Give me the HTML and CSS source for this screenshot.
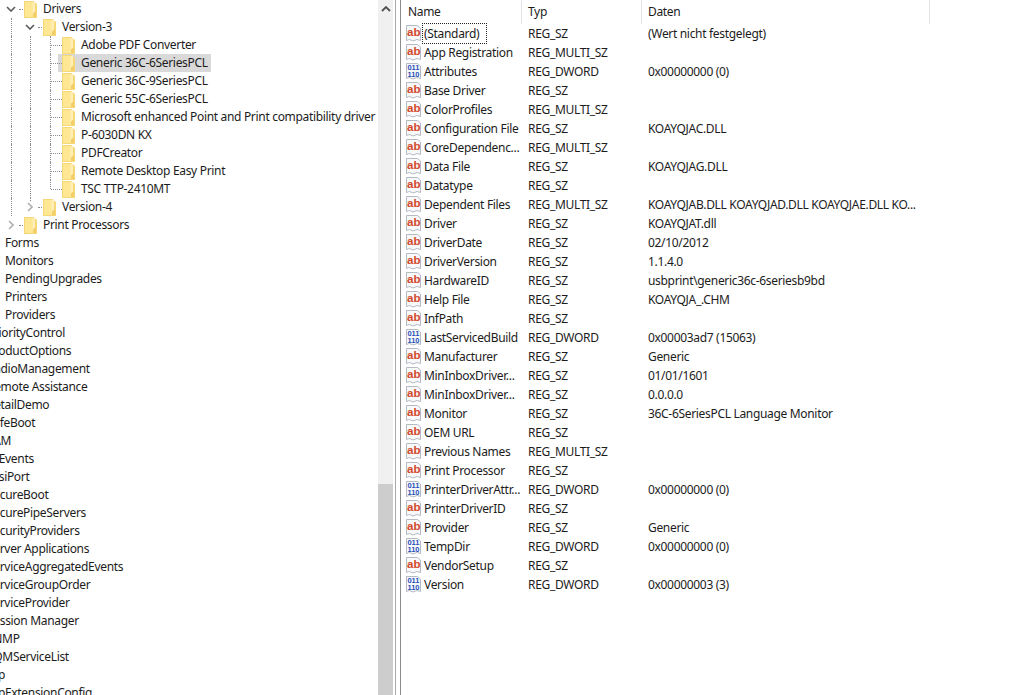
FILE: index.html
```html
<!DOCTYPE html>
<html lang="de">
<head>
<meta charset="utf-8">
<title>Registrierungs-Editor</title>
<link rel="stylesheet" href="styles.css">
</head>
<body>
<svg class="defs" width="0" height="0" aria-hidden="true">
  <symbol id="folder" viewBox="0 0 13 17">
    <path d="M0 0H9.5L13 3V17H0Z" fill="#f6d877"/>
    <path d="M1 1H11V16H1Z" fill="#ffeeb5"/>
    <path d="M1 1H8.5V16H1Z" fill="#ffe793"/>
    <path d="M9 16V12.5L12 10V16Z" fill="#f3cd66"/>
  </symbol>
  <symbol id="chev-down" viewBox="0 0 10 6">
    <path d="M1 1L5 5L9 1" fill="none" stroke="#5a5a5a" stroke-width="1.6"/>
  </symbol>
  <symbol id="chev-right" viewBox="0 0 6 10">
    <path d="M1 1L5 5L1 9" fill="none" stroke="#b0b0b0" stroke-width="1.6"/>
  </symbol>
  <symbol id="chev-up" viewBox="0 0 10 6">
    <path d="M1 5L5 1L9 5" fill="none" stroke="#505050" stroke-width="1.8"/>
  </symbol>
  <symbol id="ab" viewBox="0 0 15 17">
    <path d="M0.5 0.5H11.5L14.5 3V15.5L11 14.5L7 16L3.5 14.5L0.5 15.5Z" fill="#f7f8fa" stroke="#b4bac2"/>
    <text x="1" y="10.5" class="ab-text">ab</text>
  </symbol>
  <symbol id="bin" viewBox="0 0 15 17">
    <path d="M0.5 0.5H11.5L14.5 3V15.5L11 14.5L7 16L3.5 14.5L0.5 15.5Z" fill="#f7f8fa" stroke="#b4bac2"/>
    <text x="1.4" y="7" class="bin-text">011</text>
    <text x="1.4" y="13.5" class="bin-text">110</text>
  </symbol>
</svg>

<div class="window">
  <nav class="tree-pane">
    <div class="tree">
      <div class="row n1"><span class="exp"><svg class="cd"><use href="#chev-down"/></svg></span><svg class="fo"><use href="#folder"/></svg><span class="lb">Drivers</span></div>
      <div class="row n1"><span class="guide"></span><span class="exp"><svg class="cd"><use href="#chev-down"/></svg></span><svg class="fo"><use href="#folder"/></svg><span class="lb">Version-3</span></div>
      <div class="row n1"><span class="guide"></span><span class="guide"></span><span class="stub"></span><svg class="fo"><use href="#folder"/></svg><span class="lb">Adobe PDF Converter</span></div>
      <div class="row n1"><span class="guide"></span><span class="guide"></span><span class="stub"></span><span class="sel"><svg class="fo"><use href="#folder"/></svg><span class="lb">Generic 36C-6SeriesPCL</span></span></div>
      <div class="row n1"><span class="guide"></span><span class="guide"></span><span class="stub"></span><svg class="fo"><use href="#folder"/></svg><span class="lb">Generic 36C-9SeriesPCL</span></div>
      <div class="row n1"><span class="guide"></span><span class="guide"></span><span class="stub"></span><svg class="fo"><use href="#folder"/></svg><span class="lb">Generic 55C-6SeriesPCL</span></div>
      <div class="row n1"><span class="guide"></span><span class="guide"></span><span class="stub"></span><svg class="fo"><use href="#folder"/></svg><span class="lb">Microsoft enhanced Point and Print compatibility driver</span></div>
      <div class="row n1"><span class="guide"></span><span class="guide"></span><span class="stub"></span><svg class="fo"><use href="#folder"/></svg><span class="lb">P-6030DN KX</span></div>
      <div class="row n1"><span class="guide"></span><span class="guide"></span><span class="stub"></span><svg class="fo"><use href="#folder"/></svg><span class="lb">PDFCreator</span></div>
      <div class="row n1"><span class="guide"></span><span class="guide"></span><span class="stub"></span><svg class="fo"><use href="#folder"/></svg><span class="lb">Remote Desktop Easy Print</span></div>
      <div class="row n1"><span class="guide"></span><span class="guide"></span><span class="stub end"></span><svg class="fo"><use href="#folder"/></svg><span class="lb">TSC TTP-2410MT</span></div>
      <div class="row n1"><span class="guide"></span><span class="exp up"><svg class="cr"><use href="#chev-right"/></svg></span><svg class="fo"><use href="#folder"/></svg><span class="lb">Version-4</span></div>
      <div class="row n1"><span class="exp"><svg class="cr"><use href="#chev-right"/></svg></span><svg class="fo"><use href="#folder"/></svg><span class="lb">Print Processors</span></div>
      <div class="row n1"><span class="lb">Forms</span></div>
      <div class="row n1"><span class="lb">Monitors</span></div>
      <div class="row n1"><span class="lb">PendingUpgrades</span></div>
      <div class="row n1"><span class="lb">Printers</span></div>
      <div class="row n1"><span class="lb">Providers</span></div>
      <div class="row n0"><span class="lb">PriorityControl</span></div>
      <div class="row n0"><span class="lb">ProductOptions</span></div>
      <div class="row n0"><span class="lb">RadioManagement</span></div>
      <div class="row n0"><span class="lb">Remote Assistance</span></div>
      <div class="row n0"><span class="lb">RetailDemo</span></div>
      <div class="row n0"><span class="lb">SafeBoot</span></div>
      <div class="row n0"><span class="lb">SAM</span></div>
      <div class="row n0"><span class="lb">ScEvents</span></div>
      <div class="row n0"><span class="lb">ScsiPort</span></div>
      <div class="row n0"><span class="lb">SecureBoot</span></div>
      <div class="row n0"><span class="lb">SecurePipeServers</span></div>
      <div class="row n0"><span class="lb">SecurityProviders</span></div>
      <div class="row n0"><span class="lb">Server Applications</span></div>
      <div class="row n0"><span class="lb">ServiceAggregatedEvents</span></div>
      <div class="row n0"><span class="lb">ServiceGroupOrder</span></div>
      <div class="row n0"><span class="lb">ServiceProvider</span></div>
      <div class="row n0"><span class="lb">Session Manager</span></div>
      <div class="row n0"><span class="lb">SNMP</span></div>
      <div class="row n0"><span class="lb">SQMServiceList</span></div>
      <div class="row n0"><span class="lb">Srp</span></div>
      <div class="row n0"><span class="lb">SrpExtensionConfig</span></div>
    </div>
    <div class="scrollbar">
      <div class="track"><svg class="cu"><use href="#chev-up"/></svg></div>
      <div class="thumb"></div>
    </div>
  </nav>
  <main class="list-pane">
    <div class="head">
      <div class="hc c1">Name</div><div class="hc c2">Typ</div><div class="hc c3">Daten</div>
    </div>
    <div class="item"><svg class="ic"><use href="#ab"/></svg><span class="nm"><span class="focus">(Standard)</span></span><span class="ty">REG_SZ</span><span class="da">(Wert nicht festgelegt)</span></div>
    <div class="item"><svg class="ic"><use href="#ab"/></svg><span class="nm">App Registration</span><span class="ty">REG_MULTI_SZ</span><span class="da"></span></div>
    <div class="item"><svg class="ic"><use href="#bin"/></svg><span class="nm">Attributes</span><span class="ty">REG_DWORD</span><span class="da">0x00000000 (0)</span></div>
    <div class="item"><svg class="ic"><use href="#ab"/></svg><span class="nm">Base Driver</span><span class="ty">REG_SZ</span><span class="da"></span></div>
    <div class="item"><svg class="ic"><use href="#ab"/></svg><span class="nm">ColorProfiles</span><span class="ty">REG_MULTI_SZ</span><span class="da"></span></div>
    <div class="item"><svg class="ic"><use href="#ab"/></svg><span class="nm">Configuration File</span><span class="ty">REG_SZ</span><span class="da">KOAYQJAC.DLL</span></div>
    <div class="item"><svg class="ic"><use href="#ab"/></svg><span class="nm">CoreDependenc...</span><span class="ty">REG_MULTI_SZ</span><span class="da"></span></div>
    <div class="item"><svg class="ic"><use href="#ab"/></svg><span class="nm">Data File</span><span class="ty">REG_SZ</span><span class="da">KOAYQJAG.DLL</span></div>
    <div class="item"><svg class="ic"><use href="#ab"/></svg><span class="nm">Datatype</span><span class="ty">REG_SZ</span><span class="da"></span></div>
    <div class="item"><svg class="ic"><use href="#ab"/></svg><span class="nm">Dependent Files</span><span class="ty">REG_MULTI_SZ</span><span class="da">KOAYQJAB.DLL KOAYQJAD.DLL KOAYQJAE.DLL KO...</span></div>
    <div class="item"><svg class="ic"><use href="#ab"/></svg><span class="nm">Driver</span><span class="ty">REG_SZ</span><span class="da">KOAYQJAT.dll</span></div>
    <div class="item"><svg class="ic"><use href="#ab"/></svg><span class="nm">DriverDate</span><span class="ty">REG_SZ</span><span class="da">02/10/2012</span></div>
    <div class="item"><svg class="ic"><use href="#ab"/></svg><span class="nm">DriverVersion</span><span class="ty">REG_SZ</span><span class="da">1.1.4.0</span></div>
    <div class="item"><svg class="ic"><use href="#ab"/></svg><span class="nm">HardwareID</span><span class="ty">REG_SZ</span><span class="da">usbprint\generic36c-6seriesb9bd</span></div>
    <div class="item"><svg class="ic"><use href="#ab"/></svg><span class="nm">Help File</span><span class="ty">REG_SZ</span><span class="da">KOAYQJA_.CHM</span></div>
    <div class="item"><svg class="ic"><use href="#ab"/></svg><span class="nm">InfPath</span><span class="ty">REG_SZ</span><span class="da"></span></div>
    <div class="item"><svg class="ic"><use href="#bin"/></svg><span class="nm">LastServicedBuild</span><span class="ty">REG_DWORD</span><span class="da">0x00003ad7 (15063)</span></div>
    <div class="item"><svg class="ic"><use href="#ab"/></svg><span class="nm">Manufacturer</span><span class="ty">REG_SZ</span><span class="da">Generic</span></div>
    <div class="item"><svg class="ic"><use href="#ab"/></svg><span class="nm">MinInboxDriver...</span><span class="ty">REG_SZ</span><span class="da">01/01/1601</span></div>
    <div class="item"><svg class="ic"><use href="#ab"/></svg><span class="nm">MinInboxDriver...</span><span class="ty">REG_SZ</span><span class="da">0.0.0.0</span></div>
    <div class="item"><svg class="ic"><use href="#ab"/></svg><span class="nm">Monitor</span><span class="ty">REG_SZ</span><span class="da">36C-6SeriesPCL Language Monitor</span></div>
    <div class="item"><svg class="ic"><use href="#ab"/></svg><span class="nm">OEM URL</span><span class="ty">REG_SZ</span><span class="da"></span></div>
    <div class="item"><svg class="ic"><use href="#ab"/></svg><span class="nm">Previous Names</span><span class="ty">REG_MULTI_SZ</span><span class="da"></span></div>
    <div class="item"><svg class="ic"><use href="#ab"/></svg><span class="nm">Print Processor</span><span class="ty">REG_SZ</span><span class="da"></span></div>
    <div class="item"><svg class="ic"><use href="#bin"/></svg><span class="nm">PrinterDriverAttr...</span><span class="ty">REG_DWORD</span><span class="da">0x00000000 (0)</span></div>
    <div class="item"><svg class="ic"><use href="#ab"/></svg><span class="nm">PrinterDriverID</span><span class="ty">REG_SZ</span><span class="da"></span></div>
    <div class="item"><svg class="ic"><use href="#ab"/></svg><span class="nm">Provider</span><span class="ty">REG_SZ</span><span class="da">Generic</span></div>
    <div class="item"><svg class="ic"><use href="#bin"/></svg><span class="nm">TempDir</span><span class="ty">REG_DWORD</span><span class="da">0x00000000 (0)</span></div>
    <div class="item"><svg class="ic"><use href="#ab"/></svg><span class="nm">VendorSetup</span><span class="ty">REG_SZ</span><span class="da"></span></div>
    <div class="item"><svg class="ic"><use href="#bin"/></svg><span class="nm">Version</span><span class="ty">REG_DWORD</span><span class="da">0x00000003 (3)</span></div>
  </main>
</div>
</body>
</html>
```

FILE: styles.css
```css
* { box-sizing: border-box; }
html, body { margin: 0; height: 100%; overflow: hidden; background: #fff; }
body { font: 12px/18px "Noto Sans", "Open Sans", sans-serif; color: #1c1c1c; letter-spacing: -0.32px; }
.defs { display: block; height: 0; }
.window { display: flex; height: 695px; width: 1023px; }

.tree-pane { display: flex; width: 396px; flex: none; height: 100%; border-right: 1px solid #a8a8a8; }
.tree { width: 378px; flex: none; height: 100%; overflow: hidden; }
.row { display: flex; align-items: center; height: 18px; white-space: nowrap; }
.row.n1 { padding-left: 5px; }
.row.n0 { margin-left: -13px; }

.guide, .exp, .stub { width: 19px; height: 18px; flex: none; position: relative; display: flex; align-items: center; }
.guide::before, .exp.up::before, .stub::before { content: ""; position: absolute; left: 6px; top: 0; bottom: 0; border-left: 1px dotted #8c8c8c; }
.exp.up::before { bottom: 15px; }
.stub::before { left: 7px; }
.stub.end::before { bottom: 9px; }
.stub::after { content: ""; position: absolute; left: 8px; top: 9px; width: 11px; border-top: 1px dotted #8c8c8c; }
.exp::after { content: ""; position: absolute; left: 14px; top: 9px; width: 4px; border-top: 1px dotted #8c8c8c; }
.cd { width: 10px; height: 6px; margin-left: 1px; }
.cr { width: 6px; height: 10px; margin-left: 3px; }
.fo { width: 13px; height: 17px; flex: none; margin-right: 6px; }
.lb { line-height: 18px; }
.sel { display: flex; align-items: center; background: #d9d9d9; height: 18px; margin-left: -4px; padding-left: 4px; padding-right: 3px; }

.scrollbar { width: 15px; flex: none; background: #f0f0f0; display: flex; flex-direction: column; justify-content: space-between; height: 100%; }
.track { height: 18px; display: flex; align-items: center; justify-content: center; }
.cu { width: 10px; height: 6px; }
.thumb { height: 211px; background: #cdcdcd; }

.list-pane { flex: 1; margin-left: 4px; border-left: 1px solid #8c8c8c; height: 100%; overflow: hidden; }
.head { display: flex; height: 24px; width: 529px; }
.hc { height: 24px; line-height: 24px; border-right: 1px solid #e5e5e5; flex: none; }
.c1 { width: 121px; padding-left: 7px; }
.c2 { width: 120px; padding-left: 6px; }
.c3 { width: 288px; padding-left: 6px; }
.item { display: flex; align-items: center; height: 19px; width: 521px; padding-left: 5px; white-space: nowrap; }
.ic { width: 15px; height: 17px; flex: none; margin-right: 3px; }
.ab-text { font: 700 11.5px "Liberation Sans", sans-serif; fill: #d2492a; letter-spacing: 0; }
.bin-text { font: 700 7.5px "Liberation Sans", sans-serif; fill: #2a50b8; letter-spacing: 0; }
.nm { width: 104px; flex: none; }
.focus { outline: 1px dotted #222; display: inline-block; width: 63px; height: 19px; line-height: 19px; padding-left: 1px; margin-left: -1px; }
.ty { width: 120px; flex: none; }
.da { flex: 1; overflow: hidden; }
```
